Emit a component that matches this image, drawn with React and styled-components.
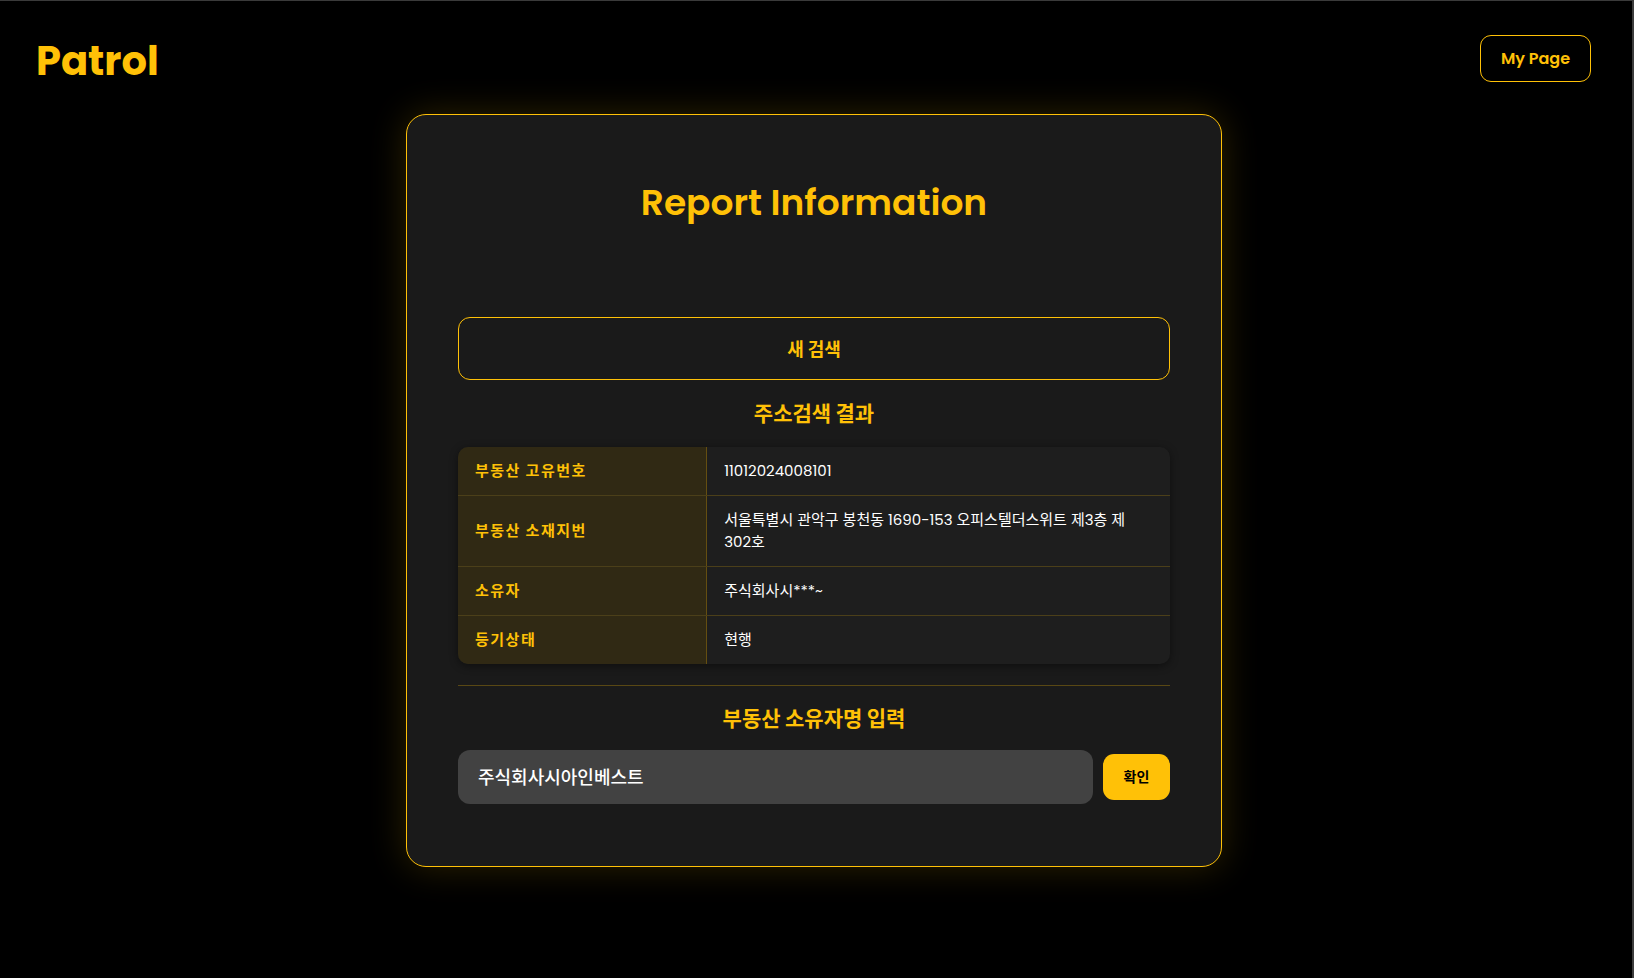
import React, { useState } from 'react'
import styled, { createGlobalStyle } from 'styled-components'

const GlobalStyle = createGlobalStyle`
  html, body {
    margin: 0;
    padding: 0;
    background: #000000;
  }
  * {
    box-sizing: border-box;
  }
  body {
    font-family: 'Poppins', 'Noto Sans', 'Noto Sans CJK KR', sans-serif;
  }
`

const rows = [
  { label: '부동산 고유번호', value: '11012024008101' },
  { label: '부동산 소재지번', value: '서울특별시 관악구 봉천동 1690-153 오피스텔더스위트 제3층 제302호' },
  { label: '소유자', value: '주식회사시***~' },
  { label: '등기상태', value: '현행' },
]

const App = () => {
  const [owner, setOwner] = useState('주식회사시아인베스트')
  return (
    <Shell>
      <GlobalStyle />
      <Page>
        <Header>
          <Logo>Patrol</Logo>
          <OutlineButton>My Page</OutlineButton>
        </Header>
        <Card>
          <Title>Report Information</Title>
          <NewSearchButton>새 검색</NewSearchButton>
          <SectionTitle>주소검색 결과</SectionTitle>
          <InfoTable>
            {rows.map((row, i) => (
              <InfoRow key={row.label} last={i === rows.length - 1}>
                <LabelCell>{row.label}</LabelCell>
                <ValueCell>{row.value}</ValueCell>
              </InfoRow>
            ))}
          </InfoTable>
          <Divider />
          <SectionTitle second>부동산 소유자명 입력</SectionTitle>
          <InputRow>
            <OwnerInput value={owner} onChange={(e) => setOwner(e.target.value)} />
            <ConfirmButton>확인</ConfirmButton>
          </InputRow>
        </Card>
      </Page>
      <ScrollTrack />
    </Shell>
  )
}

const Shell = styled.div`
  display: flex;
  min-height: 100vh;
  border-top: 1px solid #3a3a3a;
  background: #000000;
`
const Page = styled.div`
  flex: 1;
  display: flex;
  flex-direction: column;
  align-items: center;
`
const ScrollTrack = styled.div`
  width: 6px;
  border-right: 2px solid #3c3c3c;
`
const Header = styled.header`
  width: 100%;
  height: 113px;
  padding: 0 37px 0 36px;
  display: flex;
  align-items: center;
  justify-content: space-between;
`
const Logo = styled.div`
  color: #ffc107;
  font-size: 40px;
  font-weight: 700;
  line-height: 1;
  margin-top: 6px;
`
const OutlineButton = styled.button`
  width: 111px;
  height: 47px;
  margin-top: 2px;
  border: 1.5px solid #ffc107;
  border-radius: 11px;
  background: transparent;
  color: #ffc107;
  font-family: inherit;
  font-size: 16px;
  font-weight: 600;
  cursor: pointer;
`
const Card = styled.div`
  width: 816px;
  display: flex;
  flex-direction: column;
  padding: 50px 51px 62px;
  background: #1a1a1a;
  border: 1px solid #ffc107;
  border-radius: 20px;
  box-shadow: 0 0 36px rgba(255, 193, 7, 0.18);
`
const Title = styled.h1`
  margin: 16px 0 92px;
  text-align: center;
  color: #ffc107;
  font-size: 36px;
  line-height: 44px;
  font-weight: 600;
`
const NewSearchButton = styled.button`
  height: 63px;
  width: 100%;
  border: 1px solid #ffc107;
  border-radius: 12px;
  background: #1a1a1a;
  color: #ffc107;
  font-family: inherit;
  font-size: 18px;
  font-weight: 700;
  cursor: pointer;
`
const SectionTitle = styled.h2`
  margin: ${({ second }) => (second ? '19px 0 17px' : '20px 0 19px')};
  text-align: center;
  color: #ffc107;
  font-size: 21px;
  line-height: 28px;
  font-weight: 700;
`
const InfoTable = styled.div`
  display: flex;
  flex-direction: column;
  border-radius: 10px;
  overflow: hidden;
  background: #1e1e1e;
  box-shadow: 0 2px 8px rgba(0, 0, 0, 0.45);
`
const InfoRow = styled.div`
  display: grid;
  grid-template-columns: 35% 1fr;
  border-bottom: ${({ last }) => (last ? 'none' : '1px solid rgba(255, 193, 7, 0.2)')};
`
const LabelCell = styled.div`
  display: flex;
  align-items: center;
  padding: 13px 17px;
  background: #302914;
  border-right: 1px solid rgba(255, 193, 7, 0.25);
  color: #ffc107;
  font-size: 15px;
  line-height: 22px;
  letter-spacing: 1.5px;
  font-weight: 700;
`
const ValueCell = styled.div`
  display: flex;
  align-items: center;
  padding: 13px 34px 13px 17px;
  color: #ffffff;
  font-size: 15px;
  line-height: 22px;
  font-weight: 400;
`
const Divider = styled.div`
  height: 1px;
  margin-top: 21px;
  background: rgba(255, 193, 7, 0.28);
`
const InputRow = styled.div`
  display: flex;
  align-items: center;
  gap: 10px;
`
const OwnerInput = styled.input`
  flex: 1;
  height: 54px;
  padding: 0 20px;
  border: none;
  outline: none;
  border-radius: 12px;
  background: #424242;
  color: #ffffff;
  font-family: inherit;
  font-size: 18px;
  font-weight: 500;
`
const ConfirmButton = styled.button`
  width: 67px;
  height: 46px;
  border: none;
  border-radius: 11px;
  background: #ffc107;
  color: #000000;
  font-family: inherit;
  font-size: 14px;
  font-weight: 700;
  cursor: pointer;
`

export default App
